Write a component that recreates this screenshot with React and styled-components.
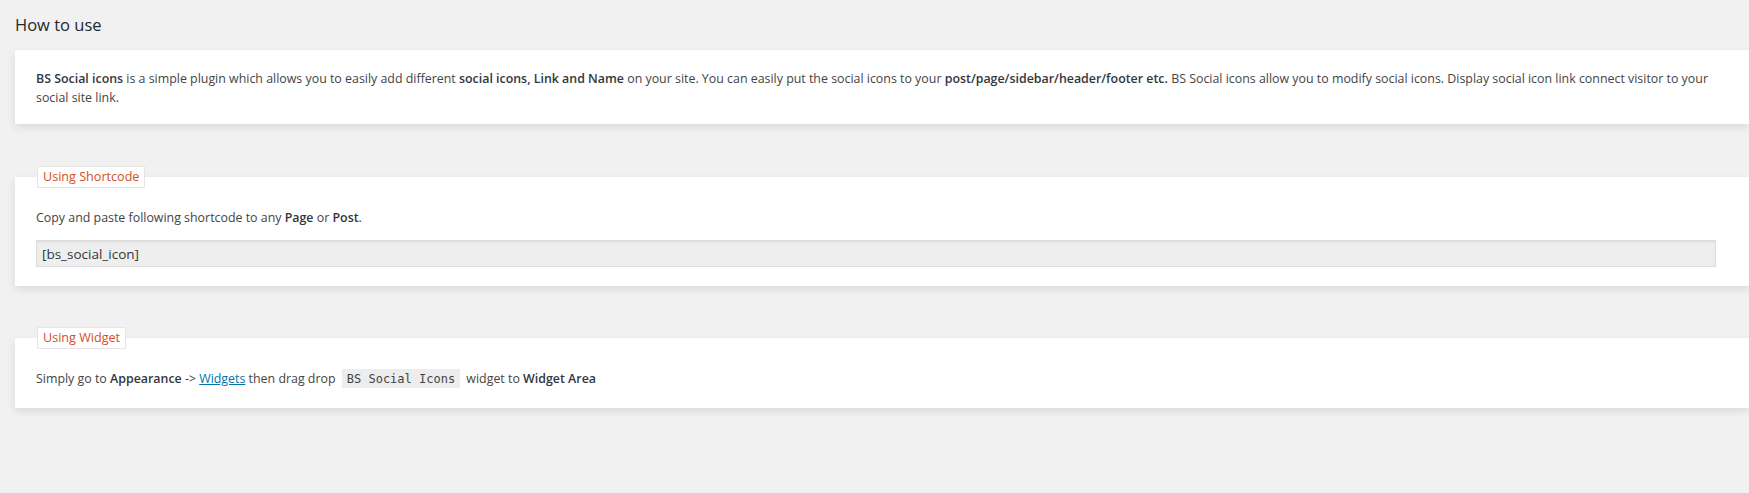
import React from 'react';
import styled, { createGlobalStyle } from 'styled-components';

const GlobalStyle = createGlobalStyle`
  html, body {
    margin: 0;
    padding: 0;
    background: #f1f1f1;
    overflow: hidden;
  }
  body {
    font-family: "Open Sans", "Noto Sans", sans-serif;
    font-size: 12.4px;
    color: #444;
  }
`;

const Wrap = styled.div`
  padding-left: 15px;
  min-height: 493px;
`;

const Title = styled.h2`
  margin: 14px 0 15px;
  font-size: 16.5px;
  font-weight: 400;
  line-height: 21px;
  color: #23282d;
`;

const Card = styled.div`
  background: #fff;
  padding: 19px 33px 17px 21px;
  box-shadow: 0 3px 8px rgba(0, 0, 0, 0.1);
`;

const Box = styled.fieldset`
  margin: 42px 0 0;
  padding: 20px 33px 19px 21px;
  border: 0;
  background: #fff;
  box-shadow: 0 3px 8px rgba(0, 0, 0, 0.1);
  min-inline-size: auto;

  & + & {
    margin-top: 41px;
  }
`;

const Legend = styled.legend`
  margin-left: 1px;
  padding: 2px 5px;
  background: #fff;
  border: 1px solid #e5e5e5;
  font-size: 12.6px;
  line-height: 16px;
  color: #d54e21;
`;

const Text = styled.p`
  margin: 0;
  line-height: 19px;
`;

const Strong = styled.b`
  font-weight: 600;
  color: #32373c;
`;

const ShortcodeInput = styled.input`
  display: block;
  box-sizing: border-box;
  width: 100%;
  height: 27px;
  margin-top: 13px;
  padding: 0 5px;
  border: 1px solid #ddd;
  background: #eee;
  box-shadow: inset 0 1px 2px rgba(0, 0, 0, 0.07);
  font-family: "Open Sans", "Noto Sans", sans-serif;
  font-size: 13.5px;
  color: #32373c;
  outline: none;
`;

const Link = styled.a`
  color: #0073aa;
  text-decoration: underline;
`;

const Code = styled.code`
  margin: 0 3px;
  padding: 3px 5px 2px;
  background: rgba(0, 0, 0, 0.07);
  font-family: "DejaVu Sans Mono", "Liberation Mono", monospace;
  font-size: 12px;
  line-height: 19px;
  color: #444;
`;

export default function App() {
  return (
    <>
      <GlobalStyle />
      <Wrap>
        <Title>How to use</Title>
        <Card>
          <Text>
            <Strong>BS Social icons</Strong> is a simple plugin which allows you to easily add different{' '}
            <Strong>social icons, Link and Name</Strong> on your site. You can easily put the social icons to your{' '}
            <Strong>post/page/sidebar/header/footer etc.</Strong> BS Social icons allow you to modify social icons.
            Display social icon link connect visitor to your social site link.
          </Text>
        </Card>

        <Box>
          <Legend>Using Shortcode</Legend>
          <Text>
            Copy and paste following shortcode to any <Strong>Page</Strong> or <Strong>Post</Strong>.
          </Text>
          <ShortcodeInput type="text" readOnly value="[bs_social_icon]" />
        </Box>

        <Box>
          <Legend>Using Widget</Legend>
          <Text>
            Simply go to <Strong>Appearance</Strong> -&gt; <Link href="#">Widgets</Link> then drag drop{' '}
            <Code>BS Social Icons</Code> widget to <Strong>Widget Area</Strong>
          </Text>
        </Box>
      </Wrap>
    </>
  );
}
